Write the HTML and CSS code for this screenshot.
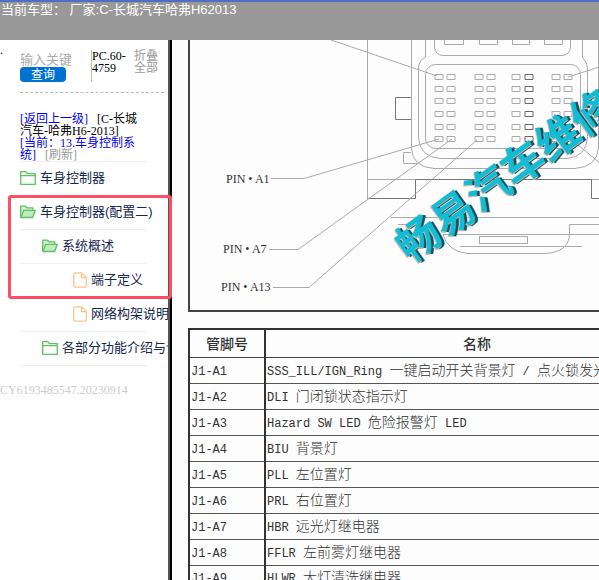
FILE: index.html
```html
<!DOCTYPE html>
<html lang="zh-CN">
<head>
  <meta charset="UTF-8">
  <meta name="viewport" content="width=device-width, initial-scale=1.0">
  <title>C-长城汽车哈弗H62013</title>
  <link rel="stylesheet" href="styles.css">
</head>
<body>

  <!-- Shared icons -->
  <svg class="sprite" aria-hidden="true">
    <symbol id="icon-folder" viewBox="0 0 16 16">
      <path d="M.7 14.300V1.700h5l1.600 2h8v10.600z M.7 5.700h14.600" fill="none" stroke="#5cc35c" stroke-width="1.300" stroke-linejoin="round"/>
    </symbol>
    <symbol id="icon-folder-open" viewBox="0 0 16 16">
      <path d="M.7 13.300V2.200h4.600l1.500 1.600h6v2.500" fill="#d5f0d5" stroke="#5cc35c" stroke-width="1.300" stroke-linejoin="round"/>
      <path d="M.9 13.500l2.900-7.200h11.500l-2.600 7.200z" fill="#c3eac3" stroke="#5cc35c" stroke-width="1.300" stroke-linejoin="round"/>
    </symbol>
    <symbol id="icon-file" viewBox="0 0 16 16">
      <path d="M9.500.8H3.200a1.500 1.500 0 0 0-1.500 1.500v11.400a1.500 1.500 0 0 0 1.500 1.500h9.600a1.500 1.500 0 0 0 1.500-1.500V5.600z M9.500.8v4.800h4.800" fill="none" stroke="#fbc58c" stroke-width="1.300" stroke-linejoin="round"/>
    </symbol>
  </svg>

  <header class="header">当前车型： 厂家:C-长城汽车哈弗H62013</header>

  <div class="layout">
    <aside class="sidebar">
      <form class="search">
        <span class="dot">.</span>
        <div class="search-box">
          <input class="keyword" type="text" placeholder="输入关键字" aria-label="输入关键字">
          <button class="search-btn" type="button">查询</button>
        </div>
        <div class="version">PC.60-<br>4759</div>
        <a class="toggle-all" href="#">折叠<br>全部</a>
      </form>

      <div class="crumbs">
        <a href="#">[返回上一级]</a> &nbsp; <span>[C-长城<br>汽车-哈弗H6-2013]</span><br>
        <a href="#">[当前：13.车身控制系<br>统]</a> &nbsp; <a class="refresh" href="#">[刷新]</a>
      </div>

      <div class="tree-wrap">
        <ul class="tree">
          <li><a href="#"><svg class="icon"><use href="#icon-folder"/></svg>车身控制器</a></li>
          <li><a href="#"><svg class="icon"><use href="#icon-folder-open"/></svg>车身控制器(配置二)</a></li>
          <li class="level-2"><a href="#"><svg class="icon"><use href="#icon-folder-open"/></svg>系统概述</a></li>
          <li class="level-3"><a href="#"><svg class="icon"><use href="#icon-file"/></svg>端子定义</a></li>
          <li class="level-3"><a href="#"><svg class="icon"><use href="#icon-file"/></svg>网络构架说明</a></li>
          <li class="level-2"><a href="#"><svg class="icon"><use href="#icon-folder"/></svg>各部分功能介绍与说明</a></li>
        </ul>
        <div class="highlight"></div>
      </div>

      <p class="serial">CY6193485547.20230914</p>
    </aside>

    <main class="content">
      <div class="sheet">
        <div class="figure">
          <svg class="diagram" viewBox="190 40 500 270" role="img" aria-label="PIN">
            <defs>
              <g id="pin-row">
                <path d="M435 0h8v5h-8z M447 0h8v5h-8z M475 0h8v5h-8z M487 0h8v5h-8z M512 0h8v5h-8z M552 0h8v5h-8z M564 0h8v5h-8z"/>
                <path d="M525 0h8v5h-8z" stroke="#666"/>
              </g>
            </defs>

            <!-- Housing -->
            <g class="thin">
              <path d="M367.500 40V198.500H415.500 M367 179.500H690"/>
              <path d="M411.500 40V148Q412 167 434 168.500H575Q597 167 598.500 148V40"/>
              <path d="M425.500 40V57Q418 61 418.500 69V138Q420 157 440 158.500H567Q586 157 587.500 138V69Q588 63 582.500 57V40"/>
              <path d="M434.500 40V47Q435 55 443 55.500H562Q570 55 570.500 47V40"/>
              <rect x="425.500" y="64.500" width="155" height="84" rx="10"/>
              <path d="M444.500 40V44.500H463.500V40 M479.500 40V44.500H497.500V40 M512.500 40V44.500H529.500V40 M544.500 40V44.500H562.500V40"/>
              <path d="M411 152.500H403.500V163.500H417"/>
            </g>
            <path class="dark" d="M411 97.500H395.500V119.500H411 M367.500 198.500H415.500V179.500H591.500V198.500H690"/>

            <!-- Pins -->
            <g class="thin">
              <use href="#pin-row" y="74.500"/>
              <use href="#pin-row" y="86.500"/>
              <use href="#pin-row" y="98.500"/>
              <use href="#pin-row" y="111.500"/>
              <use href="#pin-row" y="124.500"/>
              <use href="#pin-row" y="136.500"/>
            </g>

            <!-- Latch -->
            <g class="thin">
              <path d="M391 217.500H690 M398 224.500H410 M443 234.500H690 M460 246.500H582"/>
              <path d="M443 234Q447 251 467 253.500H545Q569 252 569.500 234V224.500H690"/>
              <rect x="479.500" y="236.500" width="48" height="7"/>
            </g>

            <!-- Leaders -->
            <g class="thin">
              <path d="M331 40L437 76 M271 178.500H304L439 139 M269 249.500H298L452 139 M273 287.500H309L477 140 M568 77L640 54 M572 140L640 196"/>
            </g>
            <g class="pin-label">
              <text x="226" y="183">PIN • A1</text>
              <text x="223" y="253">PIN • A7</text>
              <text x="221" y="291">PIN • A13</text>
            </g>

            <!-- Watermark -->
            <g class="watermark" transform="translate(410 264) rotate(-36)">
              <text class="mark-shadow" x="2" y="2">畅易汽车维修</text>
              <text class="mark-edge" x="-1" y="1">畅易汽车维修</text>
              <text class="mark-face" x="0" y="0">畅易汽车维修</text>
            </g>
          </svg>
        </div>

        <table class="pins">
          <thead>
            <tr><th class="pin-col">管脚号</th><th>名称</th></tr>
          </thead>
          <tbody>
            <tr><td><code>J1-A1</code></td><td><code>SSS_ILL/IGN_Ring </code>一键启动开关背景灯<code> / </code>点火锁发光</td></tr>
            <tr><td><code>J1-A2</code></td><td><code>DLI </code>门闭锁状态指示灯</td></tr>
            <tr><td><code>J1-A3</code></td><td><code>Hazard SW LED </code>危险报警灯<code> LED</code></td></tr>
            <tr><td><code>J1-A4</code></td><td><code>BIU </code>背景灯</td></tr>
            <tr><td><code>J1-A5</code></td><td><code>PLL </code>左位置灯</td></tr>
            <tr><td><code>J1-A6</code></td><td><code>PRL </code>右位置灯</td></tr>
            <tr><td><code>J1-A7</code></td><td><code>HBR </code>远光灯继电器</td></tr>
            <tr><td><code>J1-A8</code></td><td><code>FFLR </code>左前雾灯继电器</td></tr>
            <tr><td><code>J1-A9</code></td><td><code>HLWR </code>大灯清洗继电器</td></tr>
          </tbody>
        </table>
      </div>
    </main>
  </div>

</body>
</html>
```
FILE: styles.css
```css
/* Reset and basic styles */
* {
  margin: 0;
  padding: 0;
  box-sizing: border-box;
}

body {
  display: flex;
  flex-direction: column;
  height: 100vh;
  overflow: hidden;
  background: #fff;
  font-family: "Liberation Serif", "Noto Sans CJK SC", serif;
  font-size: 12px;
  color: #000;
}

a {
  text-decoration: none;
}

.sprite {
  display: none;
}

/* Header strip */
.header {
  flex: none;
  height: 40px;
  padding-left: 1px;
  border-top: 2px solid #4e6fc4;
  background: #999;
  color: #fff;
  font: 13px/16px "Liberation Sans", "Noto Sans CJK SC", sans-serif;
}

.layout {
  display: flex;
  flex: 1;
  min-height: 0;
}

/* Sidebar */
.sidebar {
  position: relative;
  flex: none;
  width: 172px;
  border-right: 2px solid #000;
  box-shadow: inset -2px 0 #555;
  line-height: 12px;
}

.search {
  display: flex;
  height: 53px;
  margin-right: 6px;
  padding-top: 10px;
  position: relative;
}

.search::after {
  content: "";
  position: absolute;
  left: 20px;
  right: 0;
  bottom: 0;
  border-bottom: 1px dashed #bbb;
}

.dot {
  width: 20px;
  line-height: 1px;
}

.search-box {
  width: 71px;
  padding-top: 3px;
}

.keyword {
  display: block;
  width: 51px;
  height: 14px;
  border: 0;
  background: none;
  font: 13px/14px "Liberation Sans", "Noto Sans CJK SC", sans-serif;
}

.keyword::placeholder {
  color: #aaa;
}

.search-btn {
  display: block;
  width: 46px;
  height: 15px;
  border: 0;
  border-radius: 4px;
  background: #0072cf;
  color: #fff;
  font: 12px/14px "Liberation Sans", "Noto Sans CJK SC", sans-serif;
}

.version {
  width: 43px;
  height: 32px;
  border-left: 1px solid #bbb;
}

.toggle-all {
  color: #999;
}

.crumbs {
  padding: 20px 0 0 20px;
  white-space: nowrap;
}

.crumbs a {
  color: #0000f0;
}

.crumbs .refresh {
  color: #999;
}

/* Tree menu */
.tree-wrap {
  position: relative;
}

.tree {
  width: 168px;
  padding-left: 20px;
  list-style: none;
  overflow: hidden;
}

.tree li {
  height: 34px;
  background: linear-gradient(#f0f0f0, #f0f0f0) 0 0 / 127px 1px no-repeat;
}

.tree::after {
  content: "";
  display: block;
  width: 127px;
  height: 1px;
  background: #f0f0f0;
}

.tree a {
  display: flex;
  align-items: center;
  gap: 4px;
  height: 34px;
  color: #14284f;
  font: 13px/34px "Liberation Sans", "Noto Sans CJK SC", sans-serif;
  white-space: nowrap;
}

.tree .level-2 a {
  padding-left: 22px;
}

.tree .level-3 a {
  padding-left: 52px;
  gap: 3px;
}

.icon {
  flex: none;
  width: 16px;
  height: 16px;
}

.highlight {
  position: absolute;
  top: 34px;
  left: 8px;
  width: 164px;
  height: 104px;
  border: 3px solid #fb5064;
  border-radius: 3px;
  pointer-events: none;
}

.serial {
  padding-top: 18px;
  color: #ccc;
}

/* Manual page */
.content {
  flex: 1;
  min-width: 0;
  padding-left: 16px;
  overflow: hidden;
  background: #fdfdfd;
}

.sheet {
  min-width: 502px;
}

.figure {
  border-left: 2px solid #444;
  border-bottom: 2px solid #444;
  margin-bottom: 16px;
}

.diagram {
  display: block;
  width: 500px;
  height: 270px;
  fill: none;
}

.thin {
  stroke: #aaa;
}

.dark {
  stroke: #777;
}

.pin-label {
  fill: #333;
  font-size: 12px;
}

.watermark {
  font-family: "Noto Sans CJK SC", sans-serif;
  font-size: 43px;
  font-weight: 700;
}

.mark-shadow {
  fill: #274a50;
}

.mark-edge {
  fill: #c8bfb0;
}

.mark-face {
  fill: #12bcd6;
}

/* Pin table */
.pins {
  width: 100%;
  border-collapse: collapse;
  table-layout: fixed;
  border: 2px solid #333;
  color: #333;
  font: 300 14px/20px "Noto Sans CJK SC", sans-serif;
}

.pins th {
  height: 28px;
  border: 1px solid #444;
  border-right: 2px solid #333;
  color: #333;
  font-weight: 500;
}

.pins td {
  height: 26px;
  padding-left: 1px;
  border: 1px solid #555;
  border-right: 2px solid #333;
  white-space: nowrap;
}

.pins .pin-col {
  width: 76px;
}

.pins code {
  font: 12px/20px "Liberation Mono", monospace;
  white-space: pre;
}
```
